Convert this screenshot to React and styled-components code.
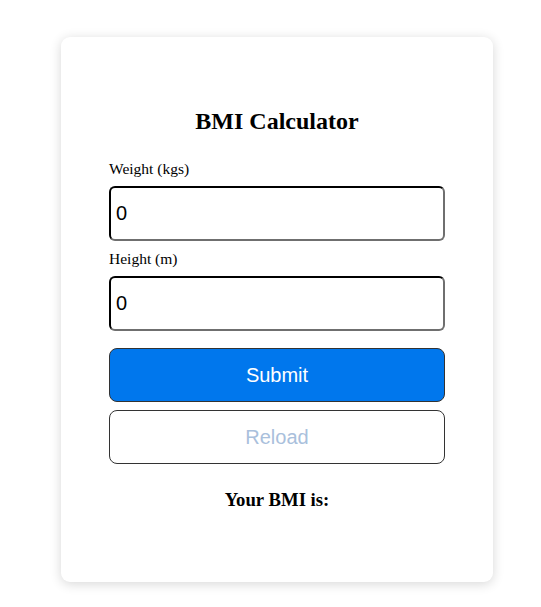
import React from 'react';
import styled, { createGlobalStyle } from 'styled-components';

const GlobalStyle = createGlobalStyle`
  body {
    margin: 0;
    background: #ffffff;
    font-family: "Liberation Serif", "Times New Roman", serif;
  }
`;

const Page = styled.div`
  padding: 37px 0 25px 61px;
`;

const Card = styled.div`
  width: 432px;
  height: 545px;
  box-sizing: border-box;
  padding: 70px 48px 0;
  background: #fff;
  border-radius: 9px;
  box-shadow: 0 2px 12px rgba(0, 0, 0, 0.16);
`;

const Title = styled.h2`
  margin: 0 0 25px;
  text-align: center;
  font-size: 24px;
  line-height: 28px;
  font-weight: bold;
  color: #000;
`;

const Label = styled.label`
  display: block;
  font-size: 15.5px;
  line-height: 18px;
  color: #000;
  margin-bottom: 8px;
`;

const Input = styled.input`
  display: block;
  width: 336px;
  height: 55px;
  box-sizing: border-box;
  margin: 0 0 ${(p) => p.$gap}px;
  padding: 0 5px;
  border: 2px inset #767676;
  border-top-color: #222;
  border-left-color: #222;
  border-right-color: #6f6f6f;
  border-bottom-color: #6f6f6f;
  border-radius: 6px;
  font-family: "Liberation Sans", Arial, sans-serif;
  font-size: 20px;
  color: #000;
  background: #fff;
`;

const Button = styled.button`
  display: block;
  width: 336px;
  height: 54px;
  box-sizing: border-box;
  margin: 0 0 8px;
  border: 1px solid #333;
  border-radius: 8px;
  background: ${(p) => (p.$primary ? '#0077ed' : '#fff')};
  color: ${(p) => (p.$primary ? '#fff' : '#a9c0dc')};
  font-family: "Liberation Sans", Arial, sans-serif;
  font-size: 20px;
  cursor: pointer;
`;

const Result = styled.h3`
  margin: 25px 0 0;
  text-align: center;
  font-size: 18.72px;
  font-weight: bold;
  color: #000;
`;

export default function App() {
  return (
    <>
      <GlobalStyle />
      <Page>
        <Card>
          <Title>BMI Calculator</Title>
          <Label>Weight (kgs)</Label>
          <Input $gap={9} defaultValue="0" />
          <Label>Height (m)</Label>
          <Input $gap={17} defaultValue="0" />
          <Button $primary>Submit</Button>
          <Button>Reload</Button>
          <Result>Your BMI is:</Result>
        </Card>
      </Page>
    </>
  );
}
